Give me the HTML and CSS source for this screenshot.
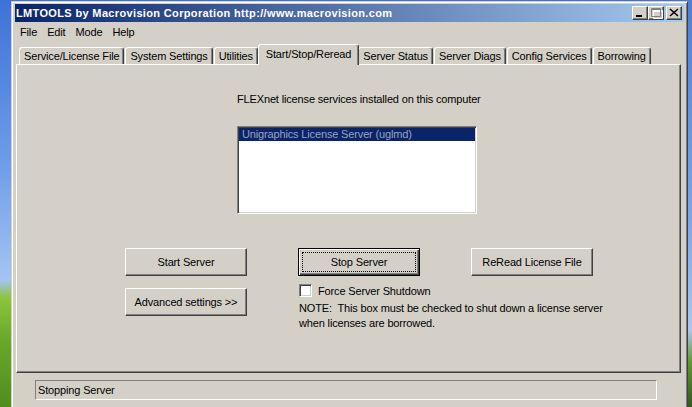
FILE: index.html
```html
<!DOCTYPE html>
<html>
<head>
  <title>LMTOOLS</title>
  <link rel="stylesheet" href="styles.css">
</head>
<body>

  <div class="window">
    <div class="titlebar">
      <span class="title">LMTOOLS by Macrovision Corporation http://www.macrovision.com</span>
      <div class="caption-buttons">
        <span class="cap-btn">
          <svg width="14" height="12" viewBox="0 0 14 12"><rect x="3" y="8" width="6" height="2" fill="#000"/></svg>
        </span>
        <span class="cap-btn">
          <svg width="14" height="12" viewBox="0 0 14 12">
            <path d="M3.5 2.5h9v8h-9z M3 3.5h10" fill="none" stroke="#fff" transform="translate(1 1)"/>
            <path d="M2.5 1.5h9v8h-9z M2 2.5h10" fill="none" stroke="#808080"/>
          </svg>
        </span>
        <span class="cap-btn close">
          <svg width="14" height="12" viewBox="0 0 14 12"><path d="M3 2l8 7M3 9l8-7" stroke="#000" stroke-width="1.6"/></svg>
        </span>
      </div>
    </div>

    <div class="menubar">
      <span class="menu-item">File</span>
      <span class="menu-item">Edit</span>
      <span class="menu-item">Mode</span>
      <span class="menu-item">Help</span>
    </div>

    <div class="tabs">
      <span class="tab">Service/License File</span>
      <span class="tab">System Settings</span>
      <span class="tab">Utilities</span>
      <span class="tab active">Start/Stop/Reread</span>
      <span class="tab">Server Status</span>
      <span class="tab">Server Diags</span>
      <span class="tab">Config Services</span>
      <span class="tab">Borrowing</span>
    </div>

    <div class="panel">
      <div class="services">
        <p class="services-label">FLEXnet license services installed on this computer</p>
        <div class="service-list">
          <div class="service-item selected">Unigraphics License Server (uglmd)</div>
        </div>
      </div>

      <div class="button-row">
        <button class="btn">Start Server</button>
        <button class="btn default">Stop Server</button>
        <button class="btn">ReRead License File</button>
      </div>

      <div class="lower-row">
        <button class="btn advanced">Advanced settings &gt;&gt;</button>
        <div class="shutdown">
          <label class="check"><span class="checkbox"></span>Force Server Shutdown</label>
          <p class="note">NOTE:&nbsp; This box must be checked to shut down a license server<br>when licenses are borrowed.</p>
        </div>
      </div>
    </div>

    <div class="statusbar">Stopping Server</div>
  </div>

</body>
</html>
```

FILE: styles.css
```css
body {
  margin: 0;
  width: 692px;
  height: 407px;
  overflow: hidden;
  font-family: "Liberation Sans", Arial, sans-serif;
  font-size: 11px;
  letter-spacing: -0.15px;
  color: #000;
  background:
    linear-gradient(to bottom, #4a7fdc 0, #7aa6ec 220px, #a9c7f0 330px, #5f9a2c 362px, #2f5a1c 407px) right top / 6px 100% no-repeat,
    linear-gradient(to bottom, #3f72d8 0, #6c9ce8 160px, #a4c4f2 280px, #8cc43c 298px, #6aa82a 340px, #4f8e1e 407px);
}

.window {
  width: 677px;
  height: 420px;
  margin: 1px 0 0 11px;
  padding: 2px 3px 3px 3px;
  box-sizing: border-box;
  background-color: #d4d0c8;
  border: 1px solid;
  border-color: #d4d0c8 #404040 #404040 #d4d0c8;
  box-shadow: inset 1px 1px #fff, inset -1px -1px #808080;
}

.titlebar {
  display: flex;
  align-items: center;
  height: 18px;
  padding-left: 1px;
  background: linear-gradient(to right, #0a246a, #a6caf0);
  color: #fff;
}

.title {
  font-weight: bold;
  font-size: 11px;
  letter-spacing: 0.35px;
  white-space: nowrap;
}

.caption-buttons {
  display: flex;
  margin-left: auto;
  margin-right: 2px;
}

.cap-btn {
  display: block;
  width: 16px;
  height: 14px;
  box-sizing: border-box;
  background-color: #d4d0c8;
  border: 1px solid;
  border-color: #fff #404040 #404040 #fff;
  box-shadow: inset -1px -1px #808080;
}

.cap-btn svg {
  display: block;
}

.cap-btn.close {
  margin-left: 2px;
}

.menubar {
  display: flex;
  height: 20px;
  line-height: 20px;
}

.menu-item {
  padding: 0 5px;
}

.tabs {
  display: flex;
  align-items: flex-end;
  height: 22px;
  padding-left: 4px;
}

.tab {
  height: 17px;
  line-height: 17px;
  padding: 0 4px 0 4px;
  margin-right: 1px;
  box-sizing: border-box;
  border-top: 1px solid #fff;
  border-left: 1px solid #fff;
  border-right: 1px solid #404040;
  border-radius: 3px 3px 0 0;
  box-shadow: inset -1px 0 #808080;
  white-space: nowrap;
}

.tab.active {
  position: relative;
  z-index: 1;
  height: 21px;
  line-height: 18px;
  margin: 0 -1px -1px -1px;
  padding: 0 7px 0 7px;
  background-color: #d4d0c8;
}

.panel {
  height: 309px;
  margin: 0 3px 0 1px;
  box-sizing: border-box;
  border: 1px solid;
  border-color: #fff #404040 #404040 #fff;
  box-shadow: inset -1px -1px #808080;
}

.services {
  margin-left: 220px;
  padding-top: 28px;
}

.services-label {
  margin: 0;
  line-height: 13px;
}

.service-list {
  width: 240px;
  height: 88px;
  margin-top: 20px;
  padding: 1px;
  box-sizing: border-box;
  background-color: #fff;
  border: 1px solid;
  border-color: #808080 #fff #fff #808080;
  box-shadow: inset 1px 1px #404040, inset -1px -1px #d4d0c8;
}

.service-item {
  height: 13px;
  line-height: 13px;
  padding-left: 3px;
  white-space: nowrap;
}

.service-item.selected {
  background-color: #0a246a;
  color: #9aa2bc;
}

.button-row {
  display: flex;
  gap: 51px;
  margin: 34px 0 0 108px;
}

.btn {
  width: 122px;
  height: 28px;
  padding: 0;
  box-sizing: border-box;
  font-family: inherit;
  font-size: 11px;
  letter-spacing: inherit;
  color: #000;
  background-color: #d4d0c8;
  border: 1px solid;
  border-color: #fff #404040 #404040 #fff;
  box-shadow: inset -1px -1px #808080;
}

.btn.default {
  border-color: #000;
  box-shadow: inset 1px 1px #fff, inset -1px -1px #404040, inset -2px -2px #808080;
  outline: 1px dotted #000;
  outline-offset: -5px;
}

.lower-row {
  display: flex;
  align-items: flex-start;
  margin-left: 108px;
}

.btn.advanced {
  margin-top: 12px;
}

.shutdown {
  margin: 8px 0 0 51px;
}

.check {
  display: flex;
  align-items: center;
  gap: 6px;
  height: 13px;
  padding-left: 1px;
}

.checkbox {
  display: block;
  width: 13px;
  height: 13px;
  box-sizing: border-box;
  background-color: #fff;
  border: 1px solid;
  border-color: #808080 #fff #fff #808080;
  box-shadow: inset 1px 1px #404040, inset -1px -1px #d4d0c8;
}

.note {
  margin: 4px 0 0 1px;
  line-height: 15px;
  white-space: nowrap;
}

.statusbar {
  width: 622px;
  height: 20px;
  margin: 7px 0 0 20px;
  padding-left: 2px;
  box-sizing: border-box;
  line-height: 18px;
  border: 1px solid;
  border-color: #808080 #fff #fff #808080;
}
```
